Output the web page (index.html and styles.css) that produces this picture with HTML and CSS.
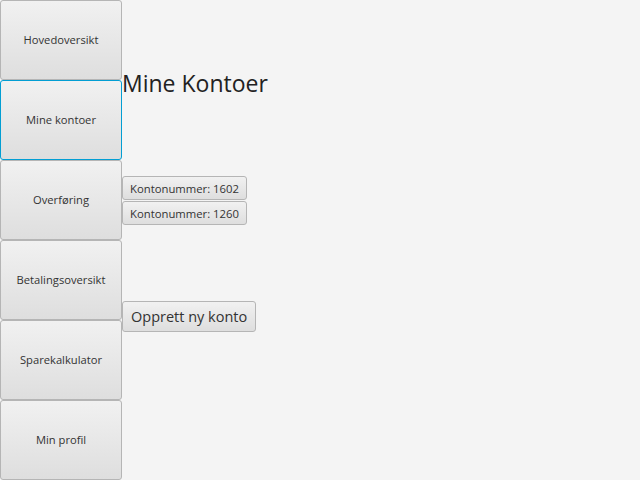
FILE: index.html
```html
<!DOCTYPE html>
<html>
<head>
<meta charset="utf-8">
<link rel="stylesheet" href="styles.css">
</head>
<body>
<div class="app">
  <nav class="sidebar">
    <button class="nav-btn">Hovedoversikt</button>
    <button class="nav-btn focused">Mine kontoer</button>
    <button class="nav-btn">Overføring</button>
    <button class="nav-btn">Betalingsoversikt</button>
    <button class="nav-btn">Sparekalkulator</button>
    <button class="nav-btn">Min profil</button>
  </nav>
  <main class="content">
    <h1 class="title">Mine Kontoer</h1>
    <div class="accounts">
      <button class="btn small">Kontonummer: 1602</button>
      <button class="btn small">Kontonummer: 1260</button>
    </div>
    <button class="btn large">Opprett ny konto</button>
  </main>
</div>
</body>
</html>
```

FILE: styles.css
```css
html, body {
  margin: 0;
  padding: 0;
  background: #f4f4f4;
}
body {
  font-family: "Open Sans", "Noto Sans", sans-serif;
  color: #333;
}
.app {
  display: flex;
  width: 640px;
  height: 480px;
}
.sidebar {
  display: flex;
  flex-direction: column;
  width: 122px;
}
.nav-btn, .btn {
  font-family: inherit;
  color: #333;
  border: 1px solid #b5b5b5;
  border-radius: 3px;
  background: linear-gradient(#f1f1f1, #dedede);
  box-sizing: border-box;
  padding: 0;
  margin: 0;
}
.nav-btn {
  height: 80px;
  width: 122px;
  font-size: 11.2px;
  padding-bottom: 2px;
}
.nav-btn.focused {
  border-color: #039ed3;
}
.content {
  display: flex;
  flex-direction: column;
  align-items: flex-start;
}
.title {
  font-weight: normal;
  font-size: 23px;
  margin: 68px 0 0 0;
  line-height: 30px;
  color: #222;
}
.accounts {
  display: flex;
  flex-direction: column;
  gap: 1px;
  margin-top: 78px;
}
.btn.small {
  height: 24px;
  font-size: 11.3px;
  padding: 0 7px;
}
.btn.large {
  margin-top: 76px;
  height: 31px;
  font-size: 14.5px;
  padding: 0 8px;
}
```
